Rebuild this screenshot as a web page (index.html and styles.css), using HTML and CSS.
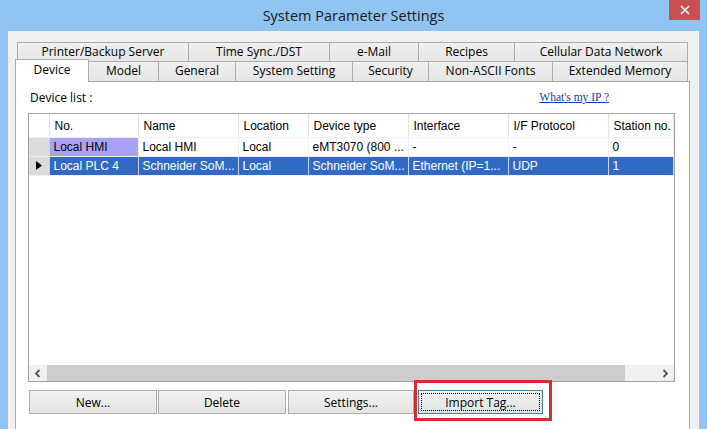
FILE: index.html
```html
<!DOCTYPE html>
<html lang="en">
<head>
  <meta charset="UTF-8">
  <title>System Parameter Settings</title>
  <link rel="stylesheet" href="styles.css">
</head>
<body>
  <div class="window">
    <div class="titlebar">
      <span></span>
      <div class="title">System Parameter Settings</div>
      <button class="close" aria-label="Close">
        <svg width="10" height="10" viewBox="0 0 10 10"><path d="M1 1 L9 9 M9 1 L1 9" stroke="#fff" stroke-width="1.6" fill="none"/></svg>
      </button>
    </div>

    <div class="dialog">
      <div class="tabs">
        <div class="tab-row back">
          <div class="tab">Printer/Backup Server</div>
          <div class="tab">Time Sync./DST</div>
          <div class="tab">e-Mail</div>
          <div class="tab">Recipes</div>
          <div class="tab">Cellular Data Network</div>
        </div>
        <div class="tab-row front">
          <div class="tab active">Device</div>
          <div class="tab">Model</div>
          <div class="tab">General</div>
          <div class="tab">System Setting</div>
          <div class="tab">Security</div>
          <div class="tab">Non-ASCII Fonts</div>
          <div class="tab">Extended Memory</div>
        </div>
      </div>

      <div class="panel">
        <div class="panel-head">
          <span>Device list :</span>
          <a href="#" class="ip-link">What's my IP ?</a>
        </div>

        <div class="grid">
          <table>
            <colgroup>
              <col class="c-rowhead"><col class="c-no"><col class="c-name"><col class="c-loc">
              <col class="c-type"><col class="c-iface"><col class="c-proto"><col class="c-station">
            </colgroup>
            <thead>
              <tr>
                <th class="corner"></th>
                <th>No.</th>
                <th>Name</th>
                <th>Location</th>
                <th>Device type</th>
                <th>Interface</th>
                <th>I/F Protocol</th>
                <th>Station no.</th>
              </tr>
            </thead>
            <tbody>
              <tr>
                <td class="rowhead"></td>
                <td class="local">Local HMI</td>
                <td>Local HMI</td>
                <td>Local</td>
                <td>eMT3070 (800 ...</td>
                <td>-</td>
                <td>-</td>
                <td>0</td>
              </tr>
              <tr class="selected">
                <td class="rowhead">
                  <svg width="6" height="9" viewBox="0 0 6 9"><polygon points="0,0 6,4.5 0,9" fill="#000"/></svg>
                </td>
                <td>Local PLC 4</td>
                <td>Schneider SoM...</td>
                <td>Local</td>
                <td>Schneider SoM...</td>
                <td>Ethernet (IP=1...</td>
                <td>UDP</td>
                <td>1</td>
              </tr>
            </tbody>
          </table>
          <div class="grid-fill"></div>
          <div class="hscroll">
            <div class="arrow">
              <svg width="7" height="9" viewBox="0 0 7 9"><path d="M5.5 1 L2 4.5 L5.5 8" stroke="#555" stroke-width="1.8" fill="none"/></svg>
            </div>
            <div class="thumb"></div>
            <div class="track"></div>
            <div class="arrow">
              <svg width="7" height="9" viewBox="0 0 7 9"><path d="M1.5 1 L5 4.5 L1.5 8" stroke="#555" stroke-width="1.8" fill="none"/></svg>
            </div>
          </div>
        </div>

        <div class="buttons">
          <button class="btn">New...</button>
          <button class="btn">Delete</button>
          <button class="btn">Settings...</button>
          <button class="btn focused"><span>Import Tag...</span></button>
        </div>
      </div>
    </div>

    <!-- annotation around the Import Tag button -->
    <div class="callout"></div>
  </div>
</body>
</html>
```

FILE: styles.css
```css
html, body {
  margin: 0;
  overflow: hidden;
}

body {
  font-family: "Open Sans", "Noto Sans", sans-serif;
  font-size: 12px;
  color: #000;
}

.window {
  position: relative;
  width: 707px;
  height: 429px;
  background: #8fc4f3;
  display: flex;
  flex-direction: column;
  overflow: hidden;
}

/* Title bar */
.titlebar {
  height: 31px;
  display: grid;
  grid-template-columns: 1fr auto 1fr;
  align-items: start;
  padding: 0 7px 0 8px;
}

.title {
  font-size: 14.5px;
  color: #1a1a1a;
  line-height: 31px;
  margin-left: -1px;
}

.close {
  justify-self: end;
  width: 31px;
  height: 20px;
  border: none;
  padding: 0;
  background: #c75050;
  display: flex;
  align-items: center;
  justify-content: center;
}

/* Dialog body */
.dialog {
  flex: 1;
  margin: 0 8px;
  background: #f0f0f0;
  padding: 11px 9px 0 7px;
  display: flex;
  flex-direction: column;
}

/* Tabs */
.tab-row {
  display: grid;
  align-items: end;
}

.tab-row.back {
  grid-template-columns: 172px 141px 89px 96px 173px;
  grid-template-rows: 20px;
  margin-left: 2px;
  margin-bottom: -1px;
}

.tab-row.front {
  grid-template-columns: 74px 70px 77px 117px 76px 124px 135px;
  grid-template-rows: 20px;
}

.tab {
  height: 20px;
  box-sizing: border-box;
  border: 1px solid #acacac;
  border-bottom: none;
  border-left: none;
  background: linear-gradient(#f0f0f0, #e5e5e5);
  text-align: center;
  line-height: 18px;
  white-space: nowrap;
}

.tab:first-child {
  border-left: 1px solid #acacac;
}

.tab.active {
  position: relative;
  z-index: 1;
  height: 23px;
  margin-bottom: -1px;
  background: #fff;
  line-height: 19px;
  border-right: 1px solid #acacac;
}

/* Panel */
.panel {
  flex: 1;
  margin-bottom: -20px;
  background: #fff;
  border: 1px solid #acacac;
  padding: 0 14px 0 12px;
  display: flex;
  flex-direction: column;
}

.panel-head {
  display: flex;
  justify-content: space-between;
  align-items: flex-start;
  padding: 8px 66px 0 2px;
  height: 16px;
  line-height: 16px;
  margin-bottom: 7px;
}

.ip-link {
  font-family: "Liberation Serif", serif;
  font-size: 11.5px;
  color: #0645ad;
  line-height: 14px;
}

/* Data grid */
.grid {
  height: 269px;
  box-sizing: border-box;
  border: 1px solid #a0a0a0;
  display: flex;
  flex-direction: column;
  font-family: "Liberation Sans", Arial, sans-serif;
  font-size: 12px;
}

table {
  border-collapse: collapse;
  table-layout: fixed;
  width: 644px;
}

.c-rowhead { width: 20px; }
.c-no { width: 89px; }
.c-name { width: 100px; }
.c-loc { width: 70px; }
.c-type { width: 100px; }
.c-iface { width: 100px; }
.c-proto { width: 100px; }
.c-station { width: 65px; }

th {
  height: 23px;
  padding: 0 0 0 5px;
  font-weight: normal;
  text-align: left;
  border-right: 1px solid #e3e3e3;
  border-bottom: 1px solid #f0f0f0;
  white-space: nowrap;
  overflow: hidden;
}

th.corner {
  padding: 0;
}

td {
  height: 18px;
  padding: 0 0 0 4px;
  border-right: 1px solid #f0f0f0;
  border-bottom: 1px solid #f0f0f0;
  white-space: nowrap;
  overflow: hidden;
}

td.rowhead {
  background: #dcdcdc;
  padding: 0 0 0 7px;
  border-right: 1px solid #d0d0d0;
}

td.local {
  background: #aaa2f8;
}

tr.selected td {
  background: #316ac5;
  color: #fff;
  border-right-color: #c8d6ee;
}

tr.selected td.rowhead {
  background: #dcdcdc;
  border-right-color: #d0d0d0;
}

.grid-fill {
  flex: 1;
}

.hscroll {
  height: 16px;
  display: flex;
  background: #f0f0f0;
}

.hscroll .arrow {
  width: 17px;
  display: flex;
  align-items: center;
  justify-content: center;
}

.hscroll .thumb {
  width: 578px;
  margin: 0 1px;
  background: #cdcdcd;
}

.hscroll .track {
  flex: 1;
}

/* Buttons */
.buttons {
  display: flex;
  margin: 8px 0 0 1px;
}

.btn {
  width: 128px;
  height: 24px;
  margin-right: 1px;
  border: 1px solid #adadad;
  background: linear-gradient(#f2f2f2, #e4e4e4);
  font-family: "Open Sans", "Noto Sans", sans-serif;
  font-size: 12px;
  color: #000;
  padding: 0;
}

.btn:nth-child(3) {
  width: 126px;
  margin-left: 1px;
  margin-right: 4px;
}

.btn.focused {
  width: 125px;
  border-color: #3c7fb1;
  padding: 2px;
  display: flex;
}

.btn.focused span {
  flex: 1;
  border: 1px dotted #000;
  display: flex;
  align-items: center;
  justify-content: center;
}

.callout {
  position: absolute;
  left: 414px;
  top: 380px;
  width: 138px;
  height: 41px;
  box-sizing: border-box;
  border: 3px solid #e0262f;
}
```
